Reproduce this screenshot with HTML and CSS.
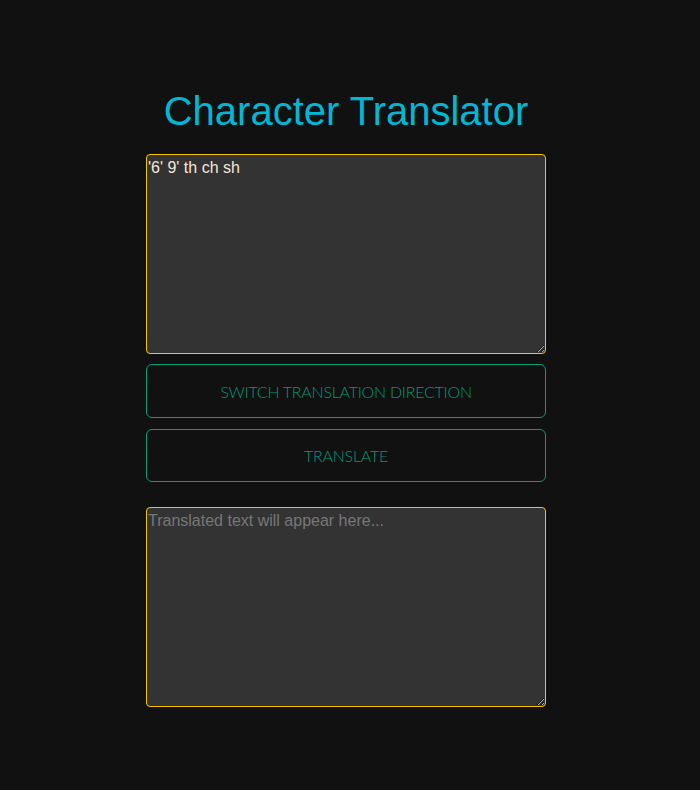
FILE: index.html
```html
<!DOCTYPE html>
<html lang="en">
<head>
<meta charset="utf-8">
<title>Character Translator</title>
<link rel="stylesheet" href="styles.css">
</head>
<body>
<main class="app">
  <h1 class="title">Character Translator</h1>
  <textarea class="box input">'6' 9' th ch sh</textarea>
  <button class="btn btn-switch">SWITCH TRANSLATION DIRECTION</button>
  <button class="btn btn-translate">TRANSLATE</button>
  <textarea class="box output" placeholder="Translated text will appear here..."></textarea>
</main>
</body>
</html>
```

FILE: styles.css
```css
html, body {
  margin: 0;
  padding: 0;
  background: #111111;
  height: 100%;
}
body {
  font-family: "Liberation Sans", Arial, sans-serif;
  padding-right: 8px;
}
.app {
  width: 400px;
  margin: 0 auto;
  padding-top: 88px;
  display: flex;
  flex-direction: column;
}
.title {
  margin: 0 0 20px;
  font-family: "Liberation Sans", Arial, sans-serif;
  font-weight: normal;
  font-size: 40px;
  line-height: 46px;
  color: #00b8d4;
  text-align: center;
}
.box {
  box-sizing: border-box;
  width: 400px;
  height: 200px;
  margin: 0;
  padding: 4px 1px 1px;
  border: 1px solid #f5c400;
  border-radius: 4px;
  background: #333333;
  color: #f3e7d8;
  font-family: "Liberation Sans", Arial, sans-serif;
  font-size: 16px;
  line-height: 18px;
  resize: vertical;
  outline: none;
}
.box::placeholder {
  color: #777777;
}
.btn {
  box-sizing: border-box;
  width: 400px;
  height: 54px;
  margin-top: 10px;
  border: 1px solid #00a27a;
  border-radius: 6px;
  background: #111111;
  color: #009a73;
  font-family: Lato, "Open Sans", sans-serif;
  font-weight: 300;
  font-size: 16px;
  letter-spacing: -0.25px;
  cursor: pointer;
}
.btn-translate {
  height: 53px;
  margin-top: 11px;
}
.output {
  margin-top: 25px;
}
```
